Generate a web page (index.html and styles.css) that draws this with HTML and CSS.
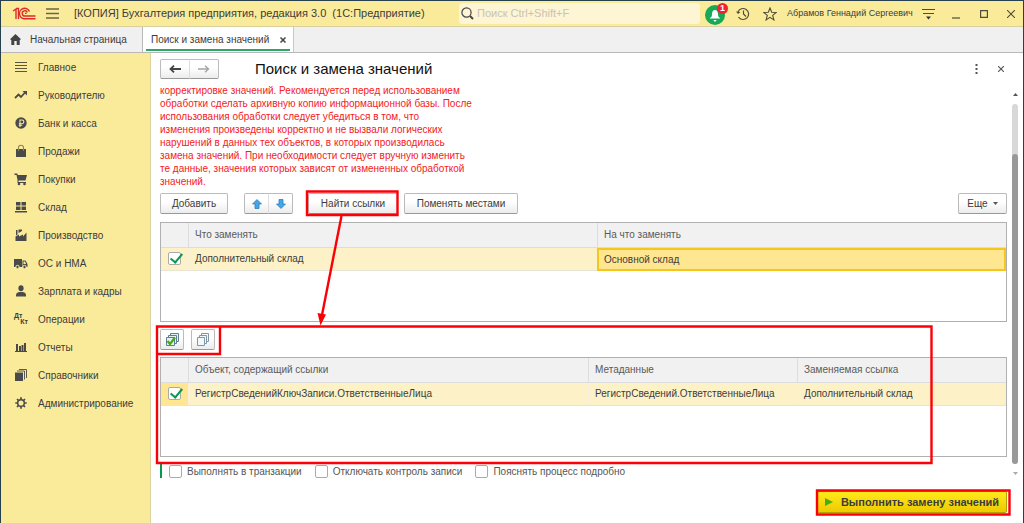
FILE: index.html
```html
<!DOCTYPE html>
<html lang="ru">
<head>
<meta charset="utf-8">
<title>Поиск и замена значений</title>
<link rel="stylesheet" href="styles.css">
</head>
<body>
<div class="window">
  <header class="titlebar">
    <svg class="logo" width="24" height="14" viewBox="0 0 24 14" fill="none" stroke="#dc2a26"><path d="M1 4l3-2v10M4 1.500h2.500V12" stroke-width="1.400"/><path d="M17.500 4.500A5.200 5.200 0 1 0 13 11.700h10.500" stroke-width="1.400"/><path d="M15.300 5.500A2.600 2.600 0 1 0 13 9h10.500" stroke-width="1.400"/><path d="M13 6.300h1.500" stroke-width="1.200"/></svg>
    <button class="icon-btn menu" aria-label="Меню"><svg width="13" height="11" viewBox="0 0 13 11" stroke="#6b6547" stroke-width="1.300"><path d="M0 1h13M0 5.500h13M0 10h13"/></svg></button>
    <span class="app-title">[КОПИЯ] Бухгалтерия предприятия, редакция 3.0&nbsp; (1С:Предприятие)</span>
    <label class="search">
      <svg width="13" height="13" viewBox="0 0 13 13" fill="none" stroke="#444"><circle cx="5.500" cy="5.500" r="4.600" stroke-width="1.200"/><path d="M9 9l3 3" stroke-width="2"/></svg>
      <input type="text" placeholder="Поиск Ctrl+Shift+F" aria-label="Поиск">
    </label>
    <button class="icon-btn bell" aria-label="Уведомления"><svg width="22" height="22" viewBox="0 0 22 22"><circle cx="10" cy="12" r="10" fill="#18a957"/><path d="M4.500 15.500c2-1.500 2.500-2 2.500-4.500 0-2.500 1.300-4 3-4s3 1.500 3 4c0 2.500.500 3 2.500 4.500z" fill="#fff"/><path d="M8.300 17h3.400l-1.700 2z" fill="#fff"/></svg><span class="badge">1</span></button>
    <button class="icon-btn history" aria-label="История"><svg width="14" height="14" viewBox="0 0 14 14" fill="none" stroke="#514d38" stroke-width="1.200"><path d="M2 5A5.500 5.500 0 1 1 2.500 10M7.500 3.500V7l2.500 2.500"/><path d="M0 4.500l2 2.500 2.500-2z" fill="#514d38" stroke="none"/></svg></button>
    <button class="icon-btn star" aria-label="Избранное"><svg width="14" height="14" viewBox="0 0 14 14" fill="none" stroke="#514d38" stroke-width="1.100"><path d="M7 1l1.700 4.300 4.500.200-3.500 2.900 1.200 4.500L7 10.400l-3.900 2.500 1.200-4.500L.800 5.500l4.500-.200z"/></svg></button>
    <span class="user">Абрамов Геннадий Сергеевич</span>
    <button class="icon-btn service" aria-label="Настройки"><svg width="13" height="12" viewBox="0 0 13 12" stroke="#514d38" stroke-width="1.200"><path d="M0 1.500h13M1 5.500h11"/><path d="M4 8.500h5l-2.500 3z" fill="#333" stroke="none"/></svg></button>
    <button class="icon-btn minimize" aria-label="Свернуть"><svg width="8" height="12" viewBox="0 0 8 12" stroke="#514d38" stroke-width="1.200"><path d="M0 10h8"/></svg></button>
    <button class="icon-btn maximize" aria-label="Развернуть"><svg width="8" height="8" viewBox="0 0 8 8" fill="none" stroke="#514d38" stroke-width="1.200"><path d="M.600.600h6.800v6.800H.600z"/></svg></button>
    <button class="icon-btn shut" aria-label="Закрыть"><svg width="8" height="8" viewBox="0 0 8 8" stroke="#514d38" stroke-width="1.100"><path d="M0 0l8 8M8 0L0 8"/></svg></button>
  </header>

  <nav class="tabs">
    <a class="tab home" href="#"><svg width="11" height="11" viewBox="0 0 11 11" fill="#444"><path d="M5.500 0L0 5.300l1.300.700V11h3V7h2.400v4h3V6l1.300-.700z"/></svg>Начальная страница</a>
    <div class="tab active"><a href="#">Поиск и замена значений</a><button class="icon-btn" aria-label="Закрыть вкладку"><svg width="6" height="6" viewBox="0 0 6 6" stroke="#444" stroke-width="1.500"><path d="M.500.500l5 5M5.500.500l-5 5"/></svg></button></div>
  </nav>

  <div class="workspace">
    <nav class="sidebar">
      <a href="#"><svg viewBox="0 0 14 14" stroke="#5a563f"><path d="M1 2.500h12M1 5.500h12M1 8.500h12M1 11.500h12"/></svg>Главное</a>
      <a href="#"><svg viewBox="0 0 14 14" fill="none" stroke="#4a4a4a" stroke-width="1.800"><path d="M1 10l3.500-3.500 2.500 2.500 4-4.500"/><path d="M8.500 3H13v4.500z" fill="#4a4a4a" stroke="none"/></svg>Руководителю</a>
      <a href="#"><svg viewBox="0 0 14 14"><circle cx="7" cy="7" r="5.700" fill="#4a4a4a"/><path d="M6 11V4h2a1.800 1.800 0 0 1 0 3.700H4.800M4.800 9.300h3.400" fill="none" stroke="#faeb9b" stroke-width="1.100"/></svg>Банк и касса</a>
      <a href="#"><svg viewBox="0 0 14 14" fill="#4a4a4a"><path d="M2 5h10v8H2z"/><path d="M4.500 7V3.500c0-3 5-3 5 0V7" fill="none" stroke="#8c845b" stroke-width="1.100"/></svg>Продажи</a>
      <a href="#"><svg viewBox="0 0 14 14" fill="#4a4a4a"><path d="M.500 1.500h2.700l.600 1.500H13l-1.500 5.500h-7V10H12v1H3.500V8L2.500 3h-2z"/><circle cx="5" cy="12" r="1.300"/><circle cx="10.500" cy="12" r="1.300"/></svg>Покупки</a>
      <a href="#"><svg viewBox="0 0 14 14" fill="#4a4a4a"><path d="M2 2h4.500v3.500H2zM7.500 2H12v3.500H7.500zM2 6.500h4.500V10H2zM7.500 6.500H12V10H7.500zM1 11h12v1.500H1z"/></svg>Склад</a>
      <a href="#"><svg viewBox="0 0 14 14" fill="#4a4a4a"><path d="M1.500 13V8.500L5 6.500v2L9 6.500v2l3.500-4V13z"/><path d="M2 2h1.500v4.500L2 7.500zM4.500 1.500H8v1.500L4.500 5z"/></svg>Производство</a>
      <a href="#"><svg viewBox="0 0 14 14" fill="#4a4a4a"><path d="M0 3h8v8H0zM8.500 4.500h3L13.500 8v3h-5z"/><g stroke="#faeb9b"><circle cx="3.500" cy="11" r="1.700"/><circle cx="10.500" cy="11" r="1.700"/></g><path d="M9.500 5.500H11L12 8H9.500z" fill="#faeb9b"/></svg>ОС и НМА</a>
      <a href="#"><svg viewBox="0 0 14 14" fill="#4a4a4a"><ellipse cx="7" cy="4.300" rx="2.600" ry="3"/><path d="M2 12.500V11c0-2 2-3 3.500-3h3c1.500 0 3.500 1 3.500 3v1.500z"/></svg>Зарплата и кадры</a>
      <a href="#"><span class="dtkt" aria-hidden="true"><b>Дт</b><b>Кт</b></span>Операции</a>
      <a href="#"><svg viewBox="0 0 14 14" fill="#4a4a4a"><path d="M2 4h2v7H2zM5 6h2v5H5zM7.500 5h2v6h-2zM10 3h2v8h-2zM1 11h12v1H1z"/></svg>Отчеты</a>
      <a href="#"><svg viewBox="0 0 14 14" fill="#4a4a4a"><path d="M1 4.500h8v8.500H1z"/><path d="M3 3h7.500v8.500M5 1.500h7.500V10" fill="none" stroke="#4a4a4a" stroke-width=".900"/></svg>Справочники</a>
      <a href="#"><svg viewBox="0 0 14 14" fill="none" stroke="#4a4a4a"><circle cx="7" cy="7" r="3.300" stroke-width="1.500"/><path d="M7 1.300v2.200M7 10.500v2.200M1.300 7h2.200M10.500 7h2.200M3 3l1.500 1.500M9.500 9.500L11 11M11 3L9.500 4.500M4.500 9.500L3 11" stroke-width="1.700"/></svg>Администрирование</a>
    </nav>

    <main class="page">
      <div class="page-head">
        <div class="group">
          <button class="btn arrow" aria-label="Назад"><svg width="12" height="8" viewBox="0 0 12 8" fill="none" stroke="#444" stroke-width="1.800"><path d="M12 4H1.500M5 .700L1.500 4 5 7.300"/></svg></button>
          <button class="btn arrow" aria-label="Вперед"><svg width="12" height="8" viewBox="0 0 12 8" fill="none" stroke="#a5a5a5" stroke-width="1.400"><path d="M0 4h10.500M7 .700L10.500 4 7 7.300"/></svg></button>
        </div>
        <h1>Поиск и замена значений</h1>
        <button class="icon-btn more-dots" aria-label="Еще действия"><svg width="3" height="10" viewBox="0 0 3 10" fill="#555"><path d="M.500 0h2v2h-2zM.500 4h2v2h-2zM.500 8h2v2h-2z"/></svg></button>
        <button class="icon-btn page-close" aria-label="Закрыть"><svg width="6" height="6" viewBox="0 0 6 6" stroke="#555" stroke-width="1.100"><path d="M0 0l6 6M6 0L0 6"/></svg></button>
      </div>

      <div class="scroll-row">
        <div class="scroll-area">
          <p class="warning">корректировке значений. Рекомендуется перед использованием<br>обработки сделать архивную копию информационной базы. После<br>использования обработки следует убедиться в том, что<br>изменения произведены корректно и не вызвали логических<br>нарушений в данных тех объектов, в которых производилась<br>замена значений. При необходимости следует вручную изменить<br>те данные, значения которых зависят от измененных обработкой<br>значений.</p>

          <div class="toolbar">
            <button class="btn add">Добавить</button>
            <div class="group">
              <button class="btn move" aria-label="Вверх"><svg width="10" height="10" viewBox="0 0 10 10" fill="#41a7e8" stroke="#2577b0" stroke-width=".700"><path d="M5 .500L9.500 5H7v4.500H3V5H.500z"/></svg></button>
              <button class="btn move" aria-label="Вниз"><svg width="10" height="10" viewBox="0 0 10 10" fill="#41a7e8" stroke="#2577b0" stroke-width=".700"><path d="M5 9.500L.500 5H3V.500h4V5h2.500z"/></svg></button>
            </div>
            <button class="btn find">Найти ссылки</button>
            <button class="btn swap">Поменять местами</button>
            <button class="btn more">Еще<svg width="5" height="3" viewBox="0 0 5 3" fill="#555"><path d="M0 0h5L2.500 3z"/></svg></button>
          </div>

          <div class="grid">
            <table>
              <colgroup><col class="c-check"><col><col class="c-half"></colgroup>
              <thead><tr><th></th><th>Что заменять</th><th>На что заменять</th></tr></thead>
              <tbody><tr><td><input type="checkbox" checked aria-label="Дополнительный склад"></td><td>Дополнительный склад</td><td class="current">Основной склад</td></tr></tbody>
            </table>
          </div>

          <div class="toolbar marks">
            <button class="btn mark" aria-label="Установить флажки"><svg width="14" height="14" viewBox="0 0 14 14" fill="#e9f0f3" stroke="#5c7f92"><path d="M5.500.500h8v8h-8z"/><path d="M3.500 2.500h8v8h-8z"/><path d="M1.500 4.500h8v8h-8z"/><path d="M2.500 8l2.500 3 5-6.500" fill="none" stroke="#45aa16" stroke-width="2.200"/></svg></button>
            <button class="btn mark" aria-label="Снять флажки"><svg width="14" height="14" viewBox="0 0 14 14" fill="#f4f7f9" stroke="#7d98a8"><path d="M5.500.500h7v8h-7z"/><path d="M3.500 2.500h7v8h-7z"/><path d="M1.500 4.500h7v8h-7z"/></svg></button>
          </div>

          <div class="grid">
            <table>
              <colgroup><col class="c-check"><col><col class="c-meta"><col class="c-link"></colgroup>
              <thead><tr><th></th><th>Объект, содержащий ссылки</th><th>Метаданные</th><th>Заменяемая ссылка</th></tr></thead>
              <tbody><tr><td class="marked"><input type="checkbox" checked aria-label="РегистрСведенийКлючЗаписи.ОтветственныеЛица"></td><td>РегистрСведенийКлючЗаписи.ОтветственныеЛица</td><td>РегистрСведений.ОтветственныеЛица</td><td>Дополнительный склад</td></tr></tbody>
            </table>
          </div>

          <div class="options">
            <label><input type="checkbox">Выполнять в транзакции</label>
            <label><input type="checkbox">Отключать контроль записи</label>
            <label><input type="checkbox">Пояснять процесс подробно</label>
          </div>
        </div>
        <div class="scrollbar" aria-hidden="true">
          <svg width="5" height="3" viewBox="0 0 5 3" fill="#555"><path d="M0 3h5L2.500 0z"/></svg>
          <div class="track"><div class="thumb"></div></div>
          <svg width="5" height="3" viewBox="0 0 5 3" fill="#aaa"><path d="M0 0h5L2.500 3z"/></svg>
        </div>
      </div>

      <footer class="actions">
        <button class="run"><svg width="8" height="8" viewBox="0 0 8 8" fill="#4dac14"><path d="M0 0l8 4-8 4z"/></svg>Выполнить замену значений</button>
      </footer>
    </main>
  </div>

  <svg class="annotations" width="1024" height="523" viewBox="0 0 1024 523" fill="none" stroke="#fb0007" stroke-width="2.400" aria-hidden="true">
    <path d="M307 191.500h90.500v23.500H307zM157 326.500h774.500v136.500H157zM157 326.500h63v27.500h-63zM817 490.500h192.500v24H817z"/>
    <path d="M341.500 216L322 315"/><path d="M317.500 313l8.500 1.500-5.500 11z" fill="#fb0007" stroke="none"/>
  </svg>
</div>
</body>
</html>
```
FILE: styles.css
```css
* { box-sizing: border-box; }
html, body { height: 100%; margin: 0; }
body { font: 10px/13px "Liberation Sans", Arial, sans-serif; color: #3c3c3c; background: #fff; }
button, input { font: inherit; color: inherit; }
a { color: inherit; text-decoration: none; }
svg { display: block; flex: none; }

.window { position: relative; display: flex; flex-direction: column; min-height: 100vh; border: 1px solid #26404e; border-bottom: 0; }
.icon-btn { display: flex; flex: none; align-items: center; justify-content: center; padding: 0; border: 0; background: none; }

.titlebar { display: flex; align-items: center; height: 26px; padding: 0 8px 0 11px; background: #faeb9b; border-bottom: 1px solid #d9d0a0; font-size: 11px; }
.menu { margin: 0 15px 0 10px; }
.app-title { flex: 1; white-space: nowrap; }
.search { flex: none; display: flex; align-items: center; gap: 3px; width: 241px; height: 21px; padding-left: 2px; background: #fdf5d3; border-radius: 3px; }
.search input { flex: 1; min-width: 0; padding: 0; border: 0; outline: 0; background: none; }
.search input::placeholder { color: #c9c3b5; opacity: 1; }
.bell { position: relative; margin-left: 5px; }
.badge { position: absolute; top: 0; right: -1px; width: 11px; height: 11px; border-radius: 50%; background: #f5222d; color: #fff; font-size: 9px; font-weight: bold; line-height: 11px; text-align: center; }
.history { margin-left: 9px; }
.star { margin-left: 13px; }
.user { flex: none; width: 125px; margin-left: 10px; font-size: 9px; white-space: nowrap; }
.service { margin-left: 10px; }
.minimize { margin-left: 17px; }
.maximize { margin-left: 20px; }
.shut { margin-left: 19px; }

.tabs { display: flex; height: 26px; background: #f0f0f0; border-bottom: 1px solid #b8b8b8; }
.tab { display: flex; align-items: center; white-space: nowrap; }
.home { gap: 9px; width: 142px; padding-left: 9px; border-right: 1px solid #b8b8b8; }
.active { position: relative; justify-content: space-between; width: 151px; padding: 0 7px 0 8px; background: #fff; border-right: 1px solid #c8c8c8; }
.active::after { content: ""; position: absolute; left: 3px; right: 3px; bottom: 1px; height: 2px; background: #2ba866; }

.workspace { flex: 1; display: flex; }
.sidebar { flex: none; width: 150px; background: #faeb9b; border-right: 1px solid #ddd2a0; }
.sidebar a { display: flex; align-items: center; gap: 10px; height: 28px; padding-left: 13px; }
.sidebar svg { width: 14px; height: 14px; }
.dtkt { display: flex; flex-direction: column; width: 14px; font-size: 7px; line-height: 6px; }
.dtkt b:last-child { align-self: flex-end; }

.page { flex: 1; min-width: 0; display: flex; flex-direction: column; padding-left: 9px; }
.page-head { display: flex; align-items: center; height: 32px; padding-right: 19px; }
.page-head h1 { flex: 1; margin: 0 0 0 36px; font-size: 15px; line-height: 20px; font-weight: normal; color: #111; }
.page-close { margin-left: 20px; }

.group { display: flex; }
.btn { display: flex; align-items: center; justify-content: center; height: 21px; padding: 0; border: 1px solid #bbb; border-bottom-color: #999; border-radius: 2px; background: linear-gradient(#fff 40%, #ececec); white-space: nowrap; }
.group .btn + .btn { border-left-color: #ddd; margin-left: -1px; border-radius: 0 2px 2px 0; }
.group .btn:first-child { border-radius: 2px 0 0 2px; }
.arrow { width: 30px; height: 20px; }
.move { width: 25px; height: 21px; }

.scroll-row { display: flex; }
.scroll-area { flex: 1; min-width: 0; overflow: hidden; }
.warning { margin: -1px 0 5px; color: #f52023; white-space: nowrap; }
.toolbar { display: flex; margin-bottom: 8px; }
.add { width: 68px; margin-right: 16px; }
.find { width: 90px; margin-left: 15px; }
.swap { width: 114px; margin-left: 6px; }
.more { width: 49px; margin-left: auto; gap: 5px; }
.marks { gap: 7px; margin: 7px 0; }
.mark { width: 24px; }

.grid { height: 100px; border: 1px solid #b0b0b0; }
.grid table { width: 100%; table-layout: fixed; border-collapse: separate; border-spacing: 0; }
.c-check { width: 27px; }
.c-half { width: 409px; }
.c-meta { width: 209px; }
.c-link { width: 209px; }
.grid th { height: 25px; padding: 0 6px 2px; background: #f1f1f1; border-bottom: 1px solid #ddd; font-weight: normal; text-align: left; color: #5a5a5a; }
.grid td { height: 23px; padding: 0 6px 1px; background: #fdf2c7; border-bottom: 1px solid #e8e4d5; }
.grid th + th { border-left: 1px solid #ddd; }
.grid td + td { border-left: 1px solid #f8f0dc; }
.grid td:first-child { padding: 0 0 2px 7px; }
.grid td.current { background: #ffe690; border: 2px solid #f5c71d; padding: 0 5px 1px; }
.grid td.marked { background: #ffe690; }

input[type="checkbox"] { appearance: none; flex: none; display: block; width: 13px; height: 13px; margin: 0; border: 1px solid #aaa; border-radius: 2px; background: #fff; position: relative; }
input[type="checkbox"]:checked::after { content: ""; position: absolute; left: 4px; top: -2px; width: 5px; height: 10px; border: solid #079a4d; border-width: 0 2px 2px 0; transform: rotate(40deg); }

.options { display: flex; gap: 13px; margin-top: 7px; padding-left: 7px; border-left: 2px solid #079a4d; color: #555; }
.options label { display: flex; align-items: center; gap: 5px; height: 14px; }

.scrollbar { display: flex; flex-direction: column; align-items: center; width: 16px; padding: 8px 0 3px; }
.track { flex: 1; width: 6px; margin: 8px 0; padding-top: 50px; border-radius: 3px; background: #d8d8d8; }
.thumb { height: 100%; border-radius: 3px; background: #999; }

.actions { display: flex; justify-content: flex-end; padding: 13px 16px 9px 0; }
.run { display: flex; align-items: center; justify-content: center; gap: 8px; width: 190px; height: 22px; padding: 0; border: 1px solid #b9a000; border-radius: 2px; background: linear-gradient(#ffe91a, #edcb00); font-size: 11px; font-weight: bold; }

.annotations { position: absolute; left: -1px; top: -1px; pointer-events: none; }
```
